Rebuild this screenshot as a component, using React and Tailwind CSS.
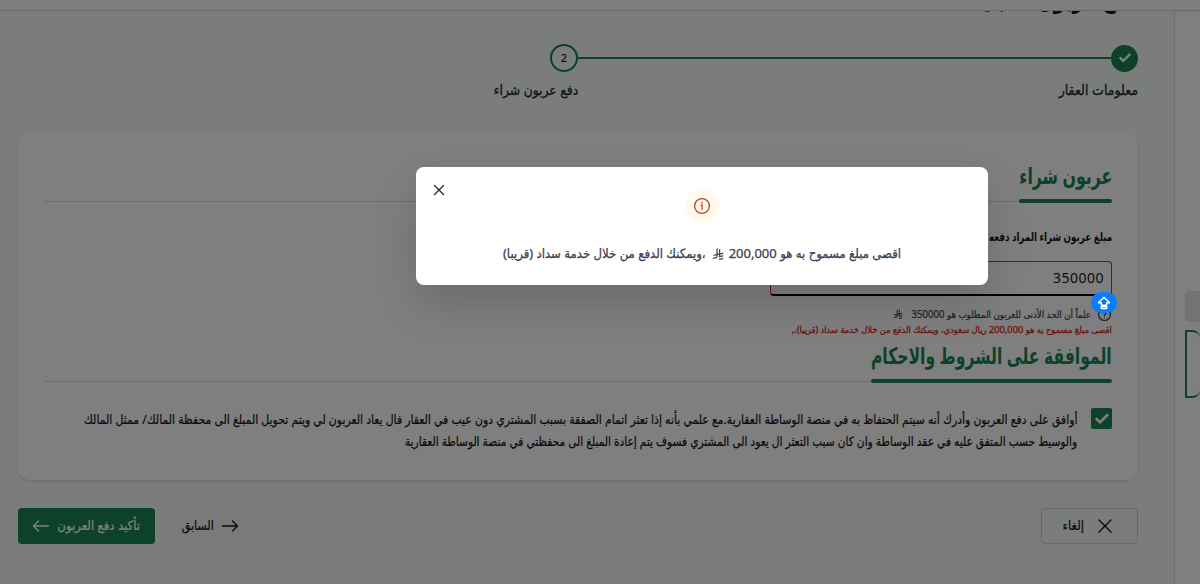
import { Check, X } from "lucide-react";

const Riyal = ({ className }) => (
  <svg viewBox="0 0 1124.14 1256.39" fill="currentColor" className={className}>
    <path d="M699.62,1113.02h0c-20.06,44.48-33.32,92.75-38.4,143.37l424.51-90.24c20.06-44.47,33.31-92.75,38.4-143.37l-424.51,90.24Z" />
    <path d="M1085.73,895.8c20.06-44.47,33.32-92.75,38.4-143.37l-330.68,70.33v-135.2l292.27-62.11c20.06-44.47,33.32-92.75,38.4-143.37l-330.68,70.27V66.13c-50.67,28.45-95.67,66.32-132.25,110.99v403.35l-132.25,28.11V0c-50.67,28.44-95.67,66.32-132.25,110.99v525.69l-295.91,62.88c-20.06,44.47-33.33,92.75-38.42,143.37l334.33-71.05v170.26l-358.3,76.14c-20.06,44.47-33.32,92.75-38.4,143.37l375.04-79.7c30.53-6.35,56.77-24.4,73.83-49.24l68.78-101.97v-.02c7.14-10.55,11.3-23.27,11.3-36.97v-149.98l132.25-28.11v270.4l424.53-90.28Z" />
  </svg>
);

const Arrow = ({ className }) => (
  <svg
    viewBox="0 0 18 14"
    fill="none"
    stroke="currentColor"
    strokeWidth="1.4"
    strokeLinecap="round"
    strokeLinejoin="round"
    className={className}
  >
    <path d="M1.5 7h15M11.5 2l5 5-5 5" />
  </svg>
);

const InfoIcon = ({ className }) => (
  <svg
    viewBox="0 0 18 18"
    fill="none"
    stroke="currentColor"
    strokeWidth="1.3"
    strokeLinecap="round"
    className={className}
  >
    <circle cx="9" cy="9" r="7.4" />
    <path d="M8.2 7.9h.9v4.3" />
    <path d="M9 5.6v.1" strokeWidth="1.6" />
  </svg>
);

const HelpIcon = ({ className }) => (
  <svg
    viewBox="0 0 16 16"
    fill="none"
    stroke="currentColor"
    strokeWidth="1.4"
    strokeLinecap="round"
    className={className}
  >
    <circle cx="8" cy="8" r="6.3" />
    <path d="M6.3 6.4c.2-2 3.6-1.8 3.4 0C9.600 7.500 8 7.500 8 8.900M8 11v.1" />
  </svg>
);

const SectionTitle = ({ children, width, scale }) => (
  <div className="flex h-[38px] border-b border-[#d8dbdf]">
    <h2 className={`relative h-[39px] shrink-0 text-[#1b8354] ${width}`}>
      <span
        className={`block w-max origin-right text-[23px] leading-[22px] font-bold whitespace-nowrap ${scale}`}
      >
        {children}
      </span>
      <span className="absolute inset-x-0 bottom-0 h-1 rounded-full bg-[#1b8354]" />
    </h2>
  </div>
);

const App = () => {
  return (
    <div
      dir="rtl"
      className="relative h-[584px] w-[1200px] overflow-hidden bg-white font-['Noto_Sans','DejaVu_Sans_Condensed','DejaVu_Sans',sans-serif] text-[#161616]"
    >
      {/* TOP BAR */}
      <div className="h-[11px] border-b border-gray-300 bg-[#fffbfc]" />

      <div className="flex h-[573px]">
        {/* SIDE PANEL */}
        <aside className="w-[26px] shrink-0 border-l border-[#d8dbdf] pt-[280px]">
          <div className="h-[31px] w-[15px] rounded-l-sm bg-gray-200" />
          <div className="mt-2 h-[68px] w-[15px] rounded-l-lg border-2 border-l-0 border-[#1b8354] [direction:ltr] -scale-x-100" />
        </aside>

        <main className="w-[1174px] shrink-0 bg-[#f4faf8] pr-9 pl-[18px]">
          {/* PAGE TITLE */}
          <div className="h-[33px] overflow-hidden">
            <h1 className="-mt-[26px] w-max origin-right scale-x-[0.88] text-2xl leading-7 font-bold whitespace-nowrap">
              دفع عربون المبايعة
            </h1>
          </div>

          {/* STEPPER */}
          <div className="flex h-7 items-center">
            <span className="flex size-[27px] shrink-0 items-center justify-center rounded-full bg-[#1b8354] text-white">
              <Check className="size-3.5" strokeWidth={4} />
            </span>
            <span className="h-0.5 w-[533px] bg-[#1b8354]" />
            <span className="flex size-7 shrink-0 items-center justify-center rounded-full border-2 border-[#1b8354] text-[11px] font-medium">
              2
            </span>
          </div>
          <div className="mt-2 flex h-5 text-sm leading-5 whitespace-nowrap text-[#1f2a37] [-webkit-text-stroke:0.3px]">
            <span className="w-[560px]">معلومات العقار</span>
            <span className="origin-right scale-x-[0.98]">دفع عربون شراء</span>
          </div>

          {/* CARD */}
          <section className="mt-8 h-[348px] rounded-xl bg-white px-[26px] pt-8 shadow-sm">
            <SectionTitle width="w-[93px]" scale="scale-x-[0.76]">
              عربون شراء
            </SectionTitle>

            <p className="mt-[25px] h-5 w-max origin-right scale-x-[0.81] text-xs leading-5 font-semibold whitespace-nowrap">
              مبلغ عربون شراء المراد دفعه
            </p>
            <div className="mt-[14px] flex h-[35px] w-[342px] items-center rounded-sm border border-b-2 border-[#d92d20] border-b-black px-[7px] text-sm tracking-[0.5px]">
              350000
            </div>

            <div className="mt-[10px] flex h-4 items-center text-[10px] whitespace-nowrap text-[#384250] [-webkit-text-stroke:0.2px]">
              <HelpIcon className="size-[15px]" />
              <span className="mr-1.5 w-[188px] origin-right scale-x-[0.957]">
                علماً أن الحد الأدنى للعربون المطلوب هو 350000
              </span>
              <Riyal className="size-[10px]" />
            </div>
            <p className="h-4 w-max origin-right scale-x-[1.03] text-[9px] leading-4 whitespace-nowrap text-[#d92d20] [-webkit-text-stroke:0.3px]">
              اقصى مبلغ مسموح به هو 200,000 ريال سعودي، ويمكنك الدفع من خلال خدمة سداد (قريبا).,
            </p>

            <div className="mt-1.5">
              <SectionTitle width="w-[241px]" scale="scale-x-[0.753]">
                الموافقة على الشروط والاحكام
              </SectionTitle>
            </div>

            <div className="mt-[26px] flex gap-3.5">
              <span className="flex size-[21px] shrink-0 items-center justify-center rounded-[2px] bg-[#1b8354] text-white">
                <Check className="size-4" strokeWidth={4} />
              </span>
              <p className="w-[1000px] text-[13px] leading-[22px] whitespace-nowrap [-webkit-text-stroke:0.2px]">
                <span className="block w-max origin-right scale-x-[0.929]">
                  أوافق على دفع العربون وأدرك أنه سيتم الحتفاظ به في منصة الوساطة العقارية.مع علمي بأنه إذا تعثر اتمام الصفقة بسبب المشتري دون عيب في العقار فال يعاد العربون لي ويتم تحويل المبلغ الى محفظة المالك/ ممثل المالك
                </span>
                <span className="block w-max origin-right scale-x-[0.907]">
                  والوسيط حسب المتفق عليه في عقد الوساطة وان كان سبب التعثر ال يعود الى المشتري فسوف يتم إعادة المبلغ الى محفظتي في منصة الوساطة العقارية
                </span>
              </p>
            </div>
          </section>

          {/* ACTIONS */}
          <div className="mt-7 flex h-9 text-[13px] whitespace-nowrap [-webkit-text-stroke:0.2px]">
            <button className="flex w-[97px] items-center gap-[9px] rounded-sm border border-gray-300 pr-5">
              <X className="size-6" strokeWidth={1.4} />
              إلغاء
            </button>
            <button className="mr-auto flex w-24 items-center gap-[7px] rounded-sm bg-[#f3f4f6] pr-5">
              <Arrow className="w-[18px]" />
              <span className="origin-right scale-x-[0.95]">السابق</span>
            </button>
            <button className="mr-2 flex w-[137px] items-center gap-[7px] rounded-sm bg-[#1b8354] pr-[15px] text-white">
              تأكيد دفع العربون
              <Arrow className="w-[18px] rotate-180" />
            </button>
          </div>
        </main>
      </div>

      {/* BACKDROP */}
      <div className="absolute inset-0 bg-black/50" />

      {/* EXTENSION BADGE */}
      <div className="absolute top-[292px] left-[1091px] flex h-[21px] w-[26px] items-center justify-center rounded-full bg-[#0a7cff]">
        <svg viewBox="0 0 14 14" className="size-3.5" fill="none" stroke="white" strokeWidth="1.4" strokeLinejoin="round">
          <path d="M7 1.200 1.300 6.800H4.300V9.200H9.700V6.800h3Z" />
          <path d="M4.300 10.600h5.400v1.900H4.300Z" />
        </svg>
      </div>

      {/* DIALOG */}
      <div className="absolute top-[167px] left-[416px] h-[118px] w-[572px] rounded-lg bg-white shadow-[0_20px_40px_rgba(0,0,0,0.15)]">
        <button className="absolute top-[14px] left-[14px] text-[#333]">
          <X className="size-[18px]" strokeWidth={1.8} />
        </button>
        <div className="flex flex-col items-center pt-[21px]">
          <span className="flex size-[35px] items-center justify-center rounded-full bg-[#fffaeb] text-[#b54732]">
            <InfoIcon className="size-[18px]" />
          </span>
          <p className="mt-[21px] flex h-5 items-center text-[13px] whitespace-nowrap text-[#384250] [-webkit-text-stroke:0.25px]">
            <span>اقصى مبلغ مسموح به هو 200,000</span>
            <Riyal className="mr-[5px] size-3" />
            <span className="mr-1.5">،ويمكنك الدفع من خلال خدمة سداد (قريبا)</span>
          </p>
        </div>
      </div>
    </div>
  );
};

export default App;
